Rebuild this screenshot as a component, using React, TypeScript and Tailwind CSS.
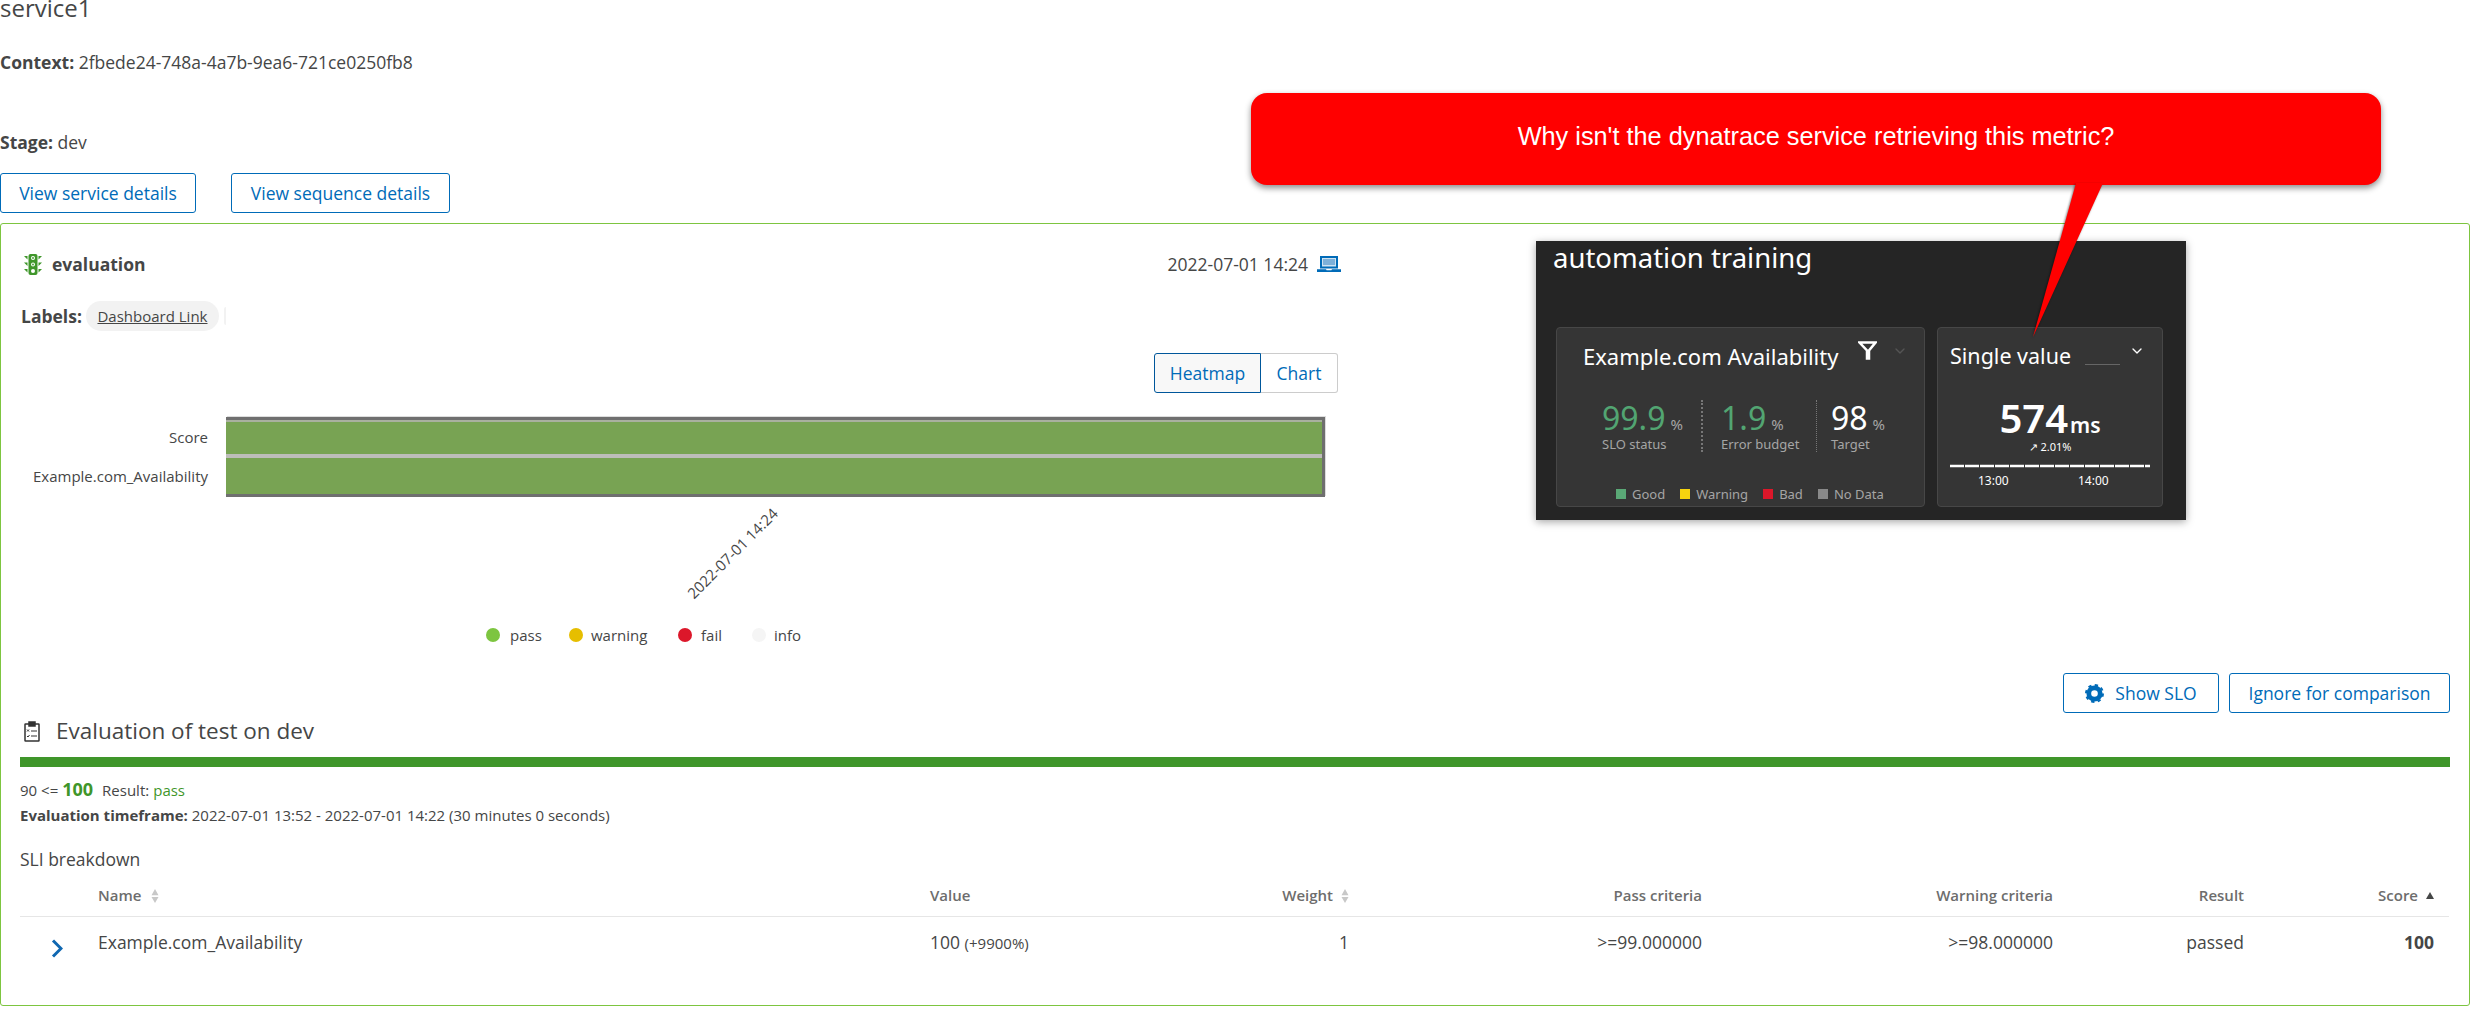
import { ChevronDown } from "lucide-react";

const gridCols = "grid grid-cols-[78px_832px_270px_149px_353px_351px_191px_190px] pr-[15px] w-[2429px]";

function TrafficLight() {
    return (
        <svg viewBox="0 0 18 21" className="w-[18px] h-[21px]" fill="#3f962a">
            <rect x="4.5" y="0" width="9" height="21" rx="2" />
            <path d="M0 2h3.5v3.5zM18 2h-3.5v3.5zM0 8.5h3.5V12zM18 8.5h-3.5V12zM0 15h3.5v3.5zM18 15h-3.5v3.5z" />
            <circle cx="9" cy="4" r="2" fill="#fff" />
            <circle cx="9" cy="10.5" r="2" fill="#fff" />
            <circle cx="9" cy="17" r="2" fill="#fff" />
            <circle cx="9" cy="4" r="0.9" />
            <circle cx="9" cy="10.5" r="0.9" />
        </svg>
    );
}

function Laptop() {
    return (
        <svg viewBox="0 0 24 16" className="w-[24px] h-[16px]" fill="#006bb8">
            <path d="M3 0h18v12.5H3zM0 13.2h9l.6 1h4.8l.6-1h9V16H0z" />
            <rect x="5" y="2" width="14" height="8.5" fill="#cfe3f2" />
            <path d="M6 3.5h12v1H6zM6 5.5h12v1H6zM6 7.5h12v1H6z" fill="#2d7fc0" />
        </svg>
    );
}

function Clipboard() {
    return (
        <svg viewBox="0 0 16 21" className="w-[16px] h-[21px]" fill="none" stroke="#333" strokeWidth="1.5">
            <rect x="1" y="3" width="14" height="17" rx="0.5" />
            <rect x="5" y="1" width="6" height="4" fill="#333" />
            <path d="M7 10h6M7 15h6" strokeWidth="1.2" />
            <path d="M3 8.5l2 2M5 8.5l-2 2M3 15l1 1 1.5-2" strokeWidth="1" />
        </svg>
    );
}

function Gear() {
    return (
        <svg viewBox="0 0 20 20" className="w-[19px] h-[19px]" fill="none" stroke="#006bb8">
            <circle cx="10" cy="10" r="6" strokeWidth="5" />
            <circle cx="10" cy="10" r="9" strokeWidth="2" strokeDasharray="3.5 3.57" />
        </svg>
    );
}

function SortIcon() {
    return (
        <svg viewBox="0 0 8 16" className="w-[8px] h-[14px]" fill="#c8c8c8">
            <path d="M4 0l4 7H0zM4 16l4-7H0z" />
        </svg>
    );
}

function Legend({ color, label, gap }: { color: string; label: string; gap: string }) {
    return (
        <div className={`flex items-center ${gap}`}>
            <span className={`w-[14px] h-[14px] rounded-full ${color}`}></span>
            <span className="text-[15px] text-[#454646]">{label}</span>
        </div>
    );
}

function SloStat({ value, label, color }: { value: string; label: string; color: string }) {
    return (
        <>
            <div className="flex items-baseline h-[36px] leading-[36px]">
                <span className={`text-[32px] ${color}`}>{value}</span>
                <span className="text-[15px] text-[#a5a5a5] ml-[5px]">%</span>
            </div>
            <div className="text-[13px] leading-[16px] text-[#a5a5a5]">{label}</div>
        </>
    );
}

function SloKey({ color, label }: { color: string; label: string }) {
    return (
        <div className="flex items-center gap-[6px]">
            <span className={`w-[10px] h-[10px] ${color}`}></span>
            <span className="text-[13px] leading-[16px] text-[#a5a5a5]">{label}</span>
        </div>
    );
}

function DashboardImage() {
    return (
        <div className="absolute left-[1536px] top-[241px] w-[650px] h-[279px] bg-[#252525] shadow-[0_2px_8px_rgba(0,0,0,0.35)] font-['Noto_Sans',sans-serif]">
            <div className="pl-[17px] text-[27.5px] leading-[34px] text-white">automation training</div>
            <div className="flex gap-[12px] pl-[20px] mt-[52px]">
                {/* SLO tile */}
                <div className="w-[369px] h-[180px] bg-[#353535] border border-[#474747] rounded-[4px]">
                    <div className="flex items-center pl-[26px] pt-[13px] h-[42px]">
                        <span className="w-[275px] text-[22px] leading-[28px] text-white">Example.com Availability</span>
                        <svg viewBox="0 0 19 19" className="w-[19px] h-[19px] -mt-[10px]" fill="#fff" stroke="#fff" strokeWidth="2.5">
                            <path d="M1.5 1.5h16l-6.5 8v8h-2v-8z" fill="none" />
                        </svg>
                        <ChevronDown className="w-[16px] h-[16px] ml-[15px] -mt-[10px] text-[#555]" />
                    </div>
                    <div className="flex pl-[45px] mt-[30px] h-[52px]">
                        <div className="w-[101px] border-r-2 border-dotted border-[#777]">
                            <SloStat value="99.9" label="SLO status" color="text-[#52a572]" />
                        </div>
                        <div className="w-[114px] pl-[18px] border-r border-dotted border-[#777]">
                            <SloStat value="1.9" label="Error budget" color="text-[#52a572]" />
                        </div>
                        <div className="pl-[14px]">
                            <SloStat value="98" label="Target" color="text-white" />
                        </div>
                    </div>
                    <div className="flex gap-[15px] pl-[59px] mt-[34px]">
                        <SloKey color="bg-[#5aa876]" label="Good" />
                        <SloKey color="bg-[#f5d30f]" label="Warning" />
                        <SloKey color="bg-[#dc172a]" label="Bad" />
                        <SloKey color="bg-[#898989]" label="No Data" />
                    </div>
                </div>

                {/* Single value tile */}
                <div className="w-[226px] h-[180px] bg-[#353535] border border-[#474747] rounded-[4px]">
                    <div className="flex items-center pl-[12px] pt-[13px] h-[42px]">
                        <span className="w-[135px] text-[21.5px] leading-[28px] text-white">Single value</span>
                        <span className="w-[35px] h-[1px] bg-[#666] mt-[18px]"></span>
                        <ChevronDown className="w-[16px] h-[16px] ml-[9px] -mt-[10px] text-white" />
                    </div>
                    <div className="flex justify-center items-baseline mt-[26px] h-[44px] leading-[44px] text-white font-semibold">
                        <span className="text-[40px]">574</span>
                        <span className="text-[21px] ml-[2px]">ms</span>
                    </div>
                    <div className="text-center text-[11px] leading-[14px] text-white">↗ 2.01%</div>
                    <svg viewBox="0 0 200 8" className="w-[200px] h-[8px] ml-[12px] mt-[8px]" fill="none" stroke="#fff" strokeWidth="2.5" strokeDasharray="14 1">
                        <path d="M0 4h200" />
                    </svg>
                    <div className="flex text-[12px] leading-[14px] text-white pl-[40px] mt-[4px]">
                        <span className="w-[100px]">13:00</span>
                        <span>14:00</span>
                    </div>
                </div>
            </div>
        </div>
    );
}

function Callout() {
    return (
        <div className="absolute left-[1251px] top-[93px] w-[1130px] h-[92px]">
            <div className="w-full h-full flex items-center justify-center pb-[4px] bg-[#ff0000] rounded-[16px] shadow-[0_3px_6px_rgba(0,0,0,0.45)] text-white text-[25.3px] font-['Liberation_Sans',Arial,sans-serif]">
                Why isn't the dynatrace service retrieving this metric?
            </div>
            {/* tail of the speech bubble */}
            <svg className="absolute left-[770px] top-[90px] drop-shadow-[-1px_1px_1px_rgba(0,0,0,0.5)]" width="90" height="156" viewBox="0 0 90 156">
                <polygon points="55,0 82,0 12,154" fill="#ff0000" />
            </svg>
        </div>
    );
}

export default function App() {
    return (
        <div className="relative w-[2478px] h-[1014px] overflow-hidden bg-white text-[#454646] font-['Open_Sans',sans-serif] text-[17.5px]">
            <div className="text-[24px] leading-[24px] -mt-[4px]">service1</div>
            <div className="leading-[24px] mt-[30px]">
                <span className="font-bold">Context:</span> 2fbede24-748a-4a7b-9ea6-721ce0250fb8
            </div>
            <div className="leading-[24px] mt-[56px]">
                <span className="font-bold">Stage:</span> dev
            </div>
            <div className="flex gap-[35px] mt-[19px]">
                <button className="w-[196px] h-[40px] border border-[#006bb8] rounded-[3px] text-[#006bb8]">View service details</button>
                <button className="w-[219px] h-[40px] border border-[#006bb8] rounded-[3px] text-[#006bb8]">View sequence details</button>
            </div>

            <div className="w-[2470px] h-[783px] mt-[10px] border border-[#7dc540] rounded-[3px] pl-[19px] pt-[28px]">
                {/* Heatmap area */}
                <div className="w-[1321px]">
                    <div className="flex items-center justify-between h-[24px]">
                        <div className="flex items-center gap-[10px] pl-[4px]">
                            <TrafficLight />
                            <span className="font-bold">evaluation</span>
                        </div>
                        <div className="flex items-center gap-[9px]">
                            <span>2022-07-01 14:24</span>
                            <Laptop />
                        </div>
                    </div>
                    <div className="flex items-center mt-[25px] pl-[1px] h-[30px]">
                        <span className="font-bold w-[65px]">Labels:</span>
                        <span className="flex items-center justify-center w-[133px] h-[30px] rounded-full bg-[#f2f2f2] text-[15px] underline">Dashboard Link</span>
                        <span className="w-[2px] h-[18px] ml-[5px] bg-[#f2f2f2] rounded-l-full"></span>
                    </div>
                    <div className="flex justify-end mt-[22px] pr-[3px]">
                        <button className="w-[107px] h-[40px] bg-[#f8f8f8] border border-[#00579b] rounded-l-[3px] text-[#006bb8]">Heatmap</button>
                        <button className="w-[77px] h-[40px] border border-l-0 border-[#cccccc] rounded-r-[3px] text-[#006bb8]">Chart</button>
                    </div>
                </div>

                <div className="flex mt-[24px]">
                    <div className="w-[206px] pr-[18px] text-right text-[15px] pt-[8px]">
                        <div className="h-[39px] leading-[24px]">Score</div>
                        <div className="leading-[24px] whitespace-nowrap">Example.com_Availability</div>
                    </div>
                    <div className="w-[1099px] h-[80px] border-y-[3px] border-r-[3px] border-[#6f6f6f] shadow-[1px_-1px_0_0_#dddddd] flex flex-col">
                        <div className="h-[2px] bg-[#a9b09f]"></div>
                        <div className="h-[32px] bg-[#78a353]"></div>
                        <div className="h-[4px] bg-[#bdbdb9]"></div>
                        <div className="flex-1 bg-[#78a353]"></div>
                    </div>
                </div>
                <div className="w-[1424px] h-[112px] flex items-center justify-center">
                    <span className="-rotate-45 text-[15px] leading-[20px]">2022-07-01 14:24</span>
                </div>
                <div className="flex items-center h-[24px] mt-[14px] pl-[466px]">
                    <Legend color="bg-[#7dc540]" label="pass" gap="gap-[10px] w-[83px]" />
                    <Legend color="bg-[#e6be00]" label="warning" gap="gap-[8px] w-[109px]" />
                    <Legend color="bg-[#dc172a]" label="fail" gap="gap-[9px] w-[74px]" />
                    <Legend color="bg-[#f5f5f5]" label="info" gap="gap-[8px]" />
                </div>

                <div className="flex justify-end gap-[10px] mt-[26px] w-[2430px]">
                    <button className="flex items-center justify-center gap-[11px] w-[156px] h-[40px] border border-[#006bb8] rounded-[3px] text-[#006bb8]">
                        <Gear />
                        Show SLO
                    </button>
                    <button className="w-[221px] h-[40px] border border-[#006bb8] rounded-[3px] text-[#006bb8]">Ignore for comparison</button>
                </div>

                {/* Evaluation detail */}
                <div className="flex items-center gap-[16px] mt-[3px] pl-[4px] h-[30px]">
                    <Clipboard />
                    <span className="text-[22.5px]">Evaluation of test on dev</span>
                </div>
                <div className="w-[2430px] h-[10px] bg-[#3f962a] mt-[11px]"></div>
                <div className="flex items-baseline h-[20px] leading-[20px] mt-[12px] text-[15px]">
                    <span>90 &lt;=</span>
                    <span className="ml-[4px] text-[18px] font-bold text-[#3f962a]">100</span>
                    <span className="ml-[9px]">Result:</span>
                    <span className="ml-[4px] text-[#3f962a]">pass</span>
                </div>
                <div className="leading-[20px] mt-[6px] text-[15px]">
                    <span className="font-bold">Evaluation timeframe:</span> 2022-07-01 13:52 - 2022-07-01 14:22 (30 minutes 0 seconds)
                </div>
                <div className="leading-[24px] mt-[22px]">SLI breakdown</div>

                <div className={`${gridCols} h-[42px] mt-[4px] items-center border-b border-[#e6e6e6] text-[15px] font-semibold text-[#6d6d6d]`}>
                    <span></span>
                    <span className="flex items-center gap-[10px]">Name <SortIcon /></span>
                    <span>Value</span>
                    <span className="flex items-center justify-end gap-[8px]">Weight <SortIcon /></span>
                    <span className="text-right">Pass criteria</span>
                    <span className="text-right">Warning criteria</span>
                    <span className="text-right">Result</span>
                    <span className="flex items-center justify-end gap-[8px]">
                        Score
                        <svg viewBox="0 0 8 7" className="w-[8px] h-[7px]" fill="#454646"><path d="M4 0l4 7H0z" /></svg>
                    </span>
                </div>
                <div className={`${gridCols} h-[51px] items-center`}>
                    <span className="pl-[31px] pt-[11px]">
                        <svg viewBox="0 0 12 19" className="w-[12px] h-[19px]" fill="none" stroke="#0f67b1" strokeWidth="3">
                            <path d="M2 1.5l8 8-8 8" />
                        </svg>
                    </span>
                    <span>Example.com_Availability</span>
                    <span>100 <span className="text-[15px]">(+9900%)</span></span>
                    <span className="text-right">1</span>
                    <span className="text-right">&gt;=99.000000</span>
                    <span className="text-right">&gt;=98.000000</span>
                    <span className="text-right">passed</span>
                    <span className="text-right font-bold">100</span>
                </div>
            </div>

            <DashboardImage />
            <Callout />
        </div>
    );
}
